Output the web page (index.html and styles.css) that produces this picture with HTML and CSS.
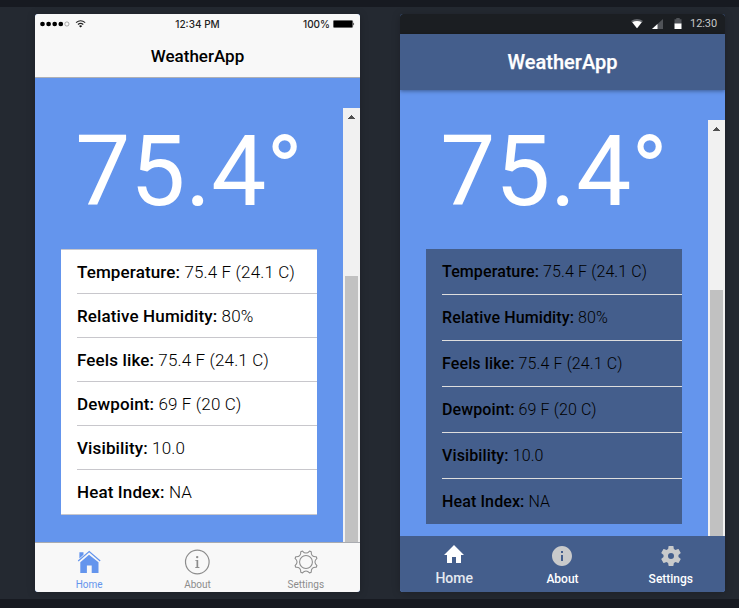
FILE: index.html
```html
<!DOCTYPE html>
<html lang="en">
<head>
<meta charset="utf-8">
<title>WeatherApp</title>
<link rel="stylesheet" href="styles.css">
</head>
<body>
<main class="stage">
  <section class="phone ios">
    <header class="top">
      <div class="status">
        <div class="signal">
          <svg width="47" height="12" viewBox="0 0 47 12">
            <g fill="#000"><circle cx="2.5" cy="6" r="2.35"/><circle cx="8.6" cy="6" r="2.35"/><circle cx="14.7" cy="6" r="2.35"/><circle cx="20.8" cy="6" r="2.35"/></g>
            <circle cx="26.9" cy="6" r="2.1" fill="none" stroke="#777" stroke-width=".6"/>
            <g fill="none" stroke="#222" stroke-width="1.1"><path d="M36 4.6Q40.6 1 45.200 4.600"/><path d="M37.900 6.500Q40.600 4.300 43.300 6.500"/></g>
            <path d="M39 8Q40.600 6.700 42.200 8L40.600 9.600Z" fill="#111"/>
          </svg>
        </div>
        <span class="clock">12:34 PM</span>
        <div class="power"><span>100%</span>
          <svg width="22" height="8" viewBox="0 0 22 8"><rect x=".4" y=".4" width="19.200" height="7.200" rx="1" fill="#000" stroke="#555" stroke-width=".6"/><path d="M20.400 2.500Q22 4 20.400 5.500Z" fill="#000"/></svg>
        </div>
      </div>
      <h1>WeatherApp</h1>
    </header>
    <div class="content">
      <div class="body">
        <div class="degrees">75.4°</div>
        <ul class="list">
          <li><div><b>Temperature:</b> 75.4 F (24.1 C)</div></li>
          <li><div><b>Relative Humidity:</b> 80%</div></li>
          <li><div><b>Feels like:</b> 75.4 F (24.1 C)</div></li>
          <li><div><b>Dewpoint:</b> 69 F (20 C)</div></li>
          <li><div><b>Visibility:</b> 10.0</div></li>
          <li><div><b>Heat Index:</b> NA</div></li>
        </ul>
      </div>
      <div class="scrollbar">
        <svg width="17" height="17" viewBox="0 0 17 17" shape-rendering="crispEdges"><path d="M8 7h1v1h1v1h1v1h1v1H5v-1h1V9h1V8h1z" fill="#505050"/></svg>
        <div class="thumb"></div>
      </div>
    </div>
    <nav class="tabs">
      <a class="tab active">
        <svg width="26" height="26" viewBox="0 0 26 26"><path d="M4.300 13.300L13 5.800l9.500 7.500V24h-6.800v-7.600h-4.800V24H4.300z" fill="currentColor"/><path d="M3.400 3.300h4.100v2.500L3.400 9.600z" fill="currentColor"/><path d="M2.200 12L13.200 2.500l11 9.500" fill="none" stroke="currentColor" stroke-width="1.200"/></svg>
        <span>Home</span>
      </a>
      <a class="tab">
        <svg width="26" height="26" viewBox="0 0 26 26"><circle cx="13.300" cy="13" r="11.800" fill="none" stroke="currentColor" stroke-width="1.200"/><circle cx="13.200" cy="8.100" r="1.200" fill="currentColor"/><path d="M11.300 10.900h2.900v7.200h1.200v.8h-4.100v-.8h1.200v-6.400h-1.200z" fill="currentColor"/></svg>
        <span>About</span>
      </a>
      <a class="tab">
        <svg width="26" height="26" viewBox="-13 -13 26 26"><g transform="scale(.96)" fill="none" stroke="currentColor" stroke-width="1.100" stroke-linejoin="round"><circle r="6.700"/><path d="M-3.710-11.410Q0-7.200 3.710-11.410L5.450-10.690Q5.090-5.090 10.690-5.450L11.410-3.710Q7.200 0 11.410 3.710L10.690 5.450Q5.090 5.090 5.450 10.690L3.710 11.410Q0 7.200-3.710 11.410L-5.450 10.690Q-5.090 5.090-10.690 5.450L-11.410 3.710Q-7.200 0-11.410-3.710L-10.690-5.450Q-5.090-5.090-5.450-10.690Z"/></g></svg>
        <span>Settings</span>
      </a>
    </nav>
  </section>

  <section class="phone android">
    <div class="status">
      <svg class="wifi" width="12" height="10" viewBox="0 0 12 10"><path d="M0 2Q6-1.800 12 2L6 9.500z" fill="#62656a"/><path d="M1.300 3.300Q6 .8 10.700 3.300L6 9.300z" fill="#fff"/></svg>
      <svg class="cell" width="11" height="11" viewBox="0 0 11 11"><path d="M11 0v10H0z" fill="#505358"/><path d="M5.500 5v5H0z" fill="#fff"/></svg>
      <svg class="battery" width="8" height="12" viewBox="0 0 8 12"><path d="M2.300 0h3.400v1.300H7.500V6H.5V1.300h1.800z" fill="#505358"/><path d="M.5 5.500h7V11h-7z" fill="#fff"/></svg>
      <span>12:30</span>
    </div>
    <header class="top"><h1>WeatherApp</h1></header>
    <div class="content">
      <div class="body">
        <div class="degrees">75.4°</div>
        <ul class="list">
          <li><div><b>Temperature:</b> 75.4 F (24.1 C)</div></li>
          <li><div><b>Relative Humidity:</b> 80%</div></li>
          <li><div><b>Feels like:</b> 75.4 F (24.1 C)</div></li>
          <li><div><b>Dewpoint:</b> 69 F (20 C)</div></li>
          <li><div><b>Visibility:</b> 10.0</div></li>
          <li><div><b>Heat Index:</b> NA</div></li>
        </ul>
      </div>
      <div class="scrollbar">
        <svg width="17" height="17" viewBox="0 0 17 17" shape-rendering="crispEdges"><path d="M8 7h1v1h1v1h1v1h1v1H5v-1h1V9h1V8h1z" fill="#505050"/></svg>
        <div class="thumb"></div>
      </div>
    </div>
    <nav class="tabs">
      <a class="tab active">
        <svg width="24" height="24" viewBox="0 0 24 24" fill="currentColor"><path d="M10 20v-6h4v6h5v-8h3L12 2 2 12h3v8z"/></svg>
        <span>Home</span>
      </a>
      <a class="tab">
        <svg width="24" height="24" viewBox="0 0 24 24" fill="currentColor"><path d="M12 2C6.480 2 2 6.480 2 12s4.480 10 10 10 10-4.480 10-10S17.520 2 12 2zm1 15h-2v-6h2v6zm0-8h-2V7h2v2z"/></svg>
        <span>About</span>
      </a>
      <a class="tab">
        <svg width="24" height="24" viewBox="0 0 24 24" fill="currentColor"><path d="M19.430 12.980c.04-.32.07-.64.07-.98s-.03-.66-.07-.98l2.110-1.650c.19-.15.24-.42.12-.64l-2-3.460c-.12-.22-.39-.3-.61-.22l-2.490 1c-.52-.4-1.080-.73-1.690-.98l-.38-2.650C14.460 2.180 14.250 2 14 2h-4c-.25 0-.46.18-.49.42l-.38 2.650c-.61.25-1.170.59-1.690.98l-2.490-1c-.23-.09-.49 0-.61.22l-2 3.460c-.13.22-.07.49.12.64l2.110 1.650c-.04.32-.07.65-.07.98s.03.66.07.98l-2.110 1.650c-.19.15-.24.42-.12.64l2 3.460c.12.22.39.3.61.22l2.490-1c.52.4 1.080.73 1.690.98l.38 2.650c.03.24.24.42.49.42h4c.25 0 .46-.18.49-.42l.38-2.650c.61-.25 1.170-.59 1.690-.98l2.490 1c.23.09.49 0 .61-.22l2-3.460c.12-.22.07-.49-.12-.64l-2.110-1.650zM12 15a3 3 0 1 1 0-6 3 3 0 0 1 0 6z"/></svg>
        <span>Settings</span>
      </a>
    </nav>
  </section>
</main>
</body>
</html>
```
FILE: styles.css
```css
* { box-sizing: border-box; }
body {
  margin: 0;
  height: 608px;
  overflow: hidden;
  background: #242931;
  border-top: 7px solid #171a21;
  border-bottom: 9px solid #171a21;
  font-family: Roboto, sans-serif;
}
h1, ul { margin: 0; padding: 0; list-style: none; }
svg { display: block; flex: none; }
.stage { display: flex; gap: 40px; padding: 7px 0 0 35px; }
.phone {
  width: 325px;
  height: 578px;
  border-radius: 3px;
  overflow: hidden;
  display: flex;
  flex-direction: column;
  background: #6495ed;
  box-shadow: 0 1px 9px rgba(0, 0, 0, .22);
}
.top h1 { text-align: center; font-weight: 500; }
.content { flex: 1; min-height: 0; display: flex; padding-top: 30px; }
.body { flex: 1; padding: 0 26px; }
.degrees {
  height: 141px;
  line-height: 127px;
  font-size: 98px;
  text-align: center;
  color: #fff;
  white-space: nowrap;
}
.list { font-weight: 300; color: #000; }
.list li { padding-left: 16px; }
.list b { font-weight: 500; }
.list div { white-space: nowrap; }
.scrollbar {
  width: 17px;
  background: #f1f1f1;
  display: flex;
  flex-direction: column;
}
.thumb { flex: 1; margin: 151px 2px 0; background: #c1c1c1; }
.tabs { display: flex; }
.tab { flex: 1; display: flex; flex-direction: column; align-items: center; }

.ios .top { height: 64px; background: #f8f8f8; border-bottom: 1px solid #aeb0b5; }
.ios .status {
  height: 20px;
  display: grid;
  grid-template-columns: 1fr auto 1fr;
  align-items: center;
  padding: 0 5px;
  font: 500 10px/20px Inter, sans-serif;
  color: #222;
}
.ios .power { display: flex; align-items: center; justify-content: flex-end; gap: 3px; }
.ios h1 { font-size: 17px; line-height: 44px; color: #000; }
.ios .list { background: #fff; border: solid #c8c7cc; border-width: 1px 0; font-size: 17px; letter-spacing: .13px; }
.ios .list div { height: 44px; line-height: 44px; border-bottom: 1px solid #c8c7cc; }
.ios .list li:last-child div { border: 0; }
.ios .tabs { height: 50px; background: #f8f8f8; border-top: 1px solid #a9abb0; color: #8c8c8c; }
.ios .tab { padding-top: 6px; font-size: 10px; line-height: 12px; }
.ios .tab span { margin-top: 4px; }
.ios .active { color: #6495ed; }

.android .status {
  height: 20px;
  display: flex;
  align-items: center;
  justify-content: flex-end;
  padding-right: 8px;
  background: #1b1e22;
  color: #c6c7c8;
  font-size: 11px;
  line-height: 22px;
  letter-spacing: -.1px;
}
.android .cell { margin-left: 9px; }
.android .battery { margin: 0 8px 0 11px; }
.android .top {
  height: 56px;
  background: #445e8c;
  color: #fff;
  box-shadow: 0 1px 4px rgba(0, 0, 0, .4);
}
.android h1 { font-size: 20px; line-height: 56px; -webkit-text-stroke: .25px #fff; }
.android .degrees { height: 129px; line-height: 103px; }
.android .list { background: #445e8c; font-size: 16px; letter-spacing: .12px; }
.android .list div { height: 46px; line-height: 45px; border-bottom: 1px solid #dedede; }
.android .list li:last-child div { height: 45px; border: 0; }
.android .thumb { margin-top: 153px; }
.android .tabs { height: 56px; background: #445e8c; color: #c9cacb; }
.android .tab { padding-top: 8px; font-size: 12px; font-weight: 500; line-height: 16px; }
.android .tab span { color: #fff; margin-top: 3px; }
.android .active { color: #fff; padding-top: 7px; font-size: 14px; }
.android .active span { color: #e5e9f0; }
```
